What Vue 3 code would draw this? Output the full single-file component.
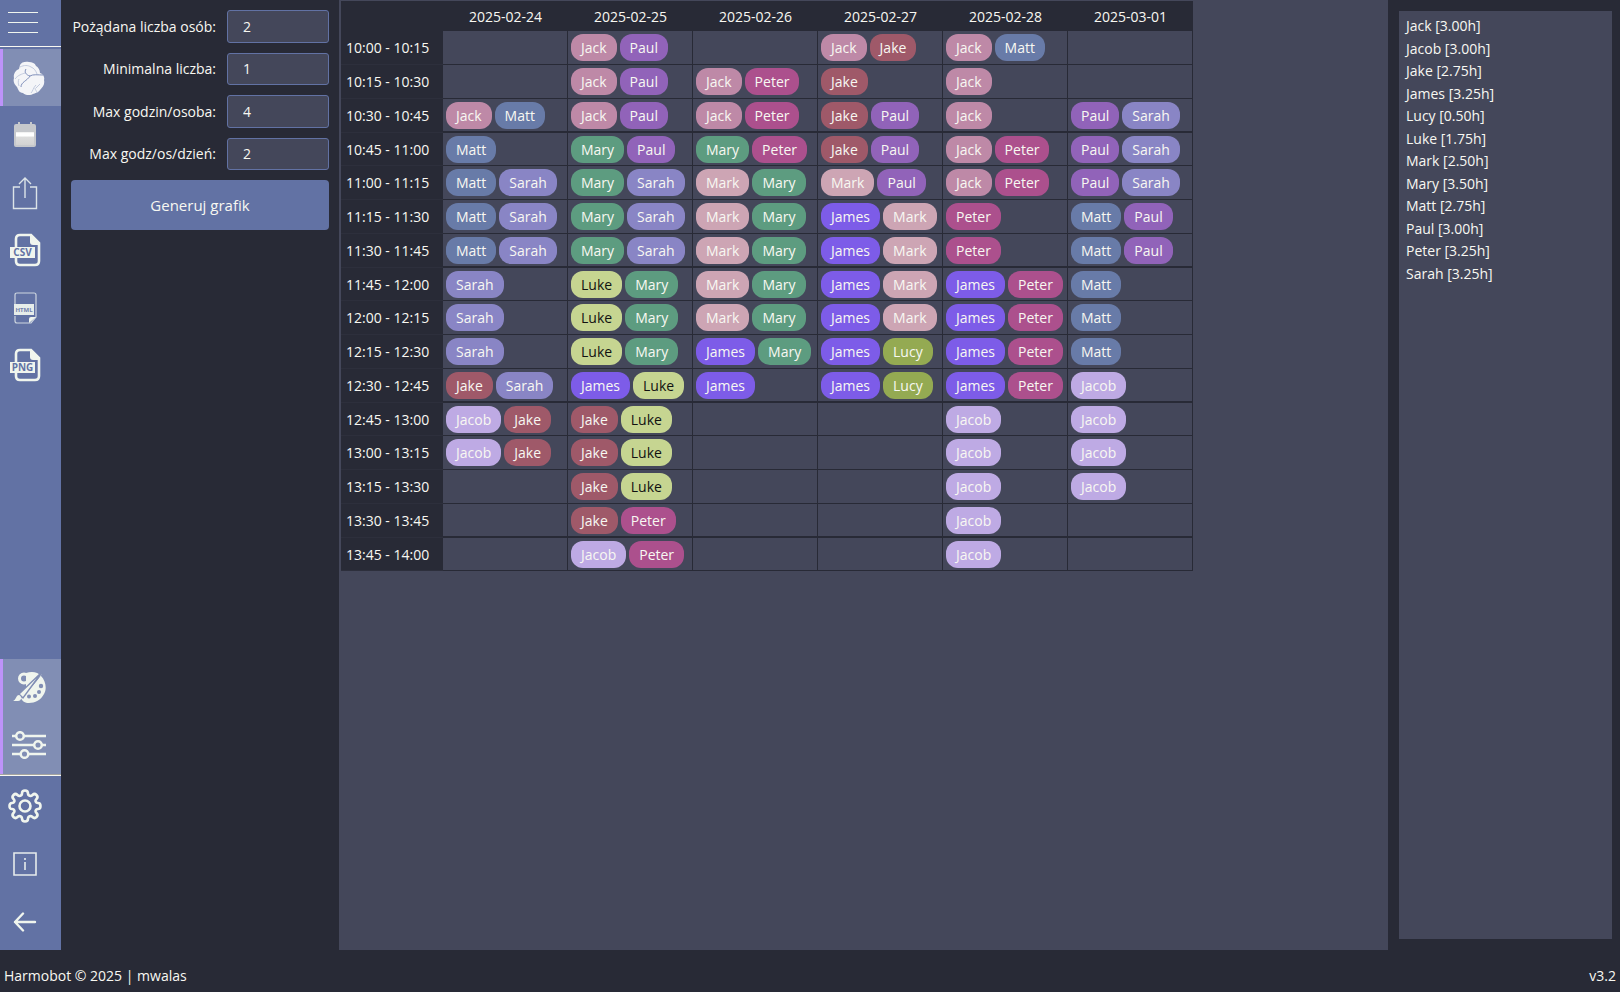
<script setup>
import { reactive } from 'vue'

const fields = reactive([
  { id: 'wanted', label: 'Pożądana liczba osób:', value: '2' },
  { id: 'minimum', label: 'Minimalna liczba:', value: '1' },
  { id: 'max-person', label: 'Max godzin/osoba:', value: '4' },
  { id: 'max-day', label: 'Max godz/os/dzień:', value: '2' },
])

const days = ['2025-02-24', '2025-02-25', '2025-02-26', '2025-02-27', '2025-02-28', '2025-03-01']

const schedule = [
  ['10:00 - 10:15', '', 'Jack Paul', '', 'Jack Jake', 'Jack Matt', ''],
  ['10:15 - 10:30', '', 'Jack Paul', 'Jack Peter', 'Jake', 'Jack', ''],
  ['10:30 - 10:45', 'Jack Matt', 'Jack Paul', 'Jack Peter', 'Jake Paul', 'Jack', 'Paul Sarah'],
  ['10:45 - 11:00', 'Matt', 'Mary Paul', 'Mary Peter', 'Jake Paul', 'Jack Peter', 'Paul Sarah'],
  ['11:00 - 11:15', 'Matt Sarah', 'Mary Sarah', 'Mark Mary', 'Mark Paul', 'Jack Peter', 'Paul Sarah'],
  ['11:15 - 11:30', 'Matt Sarah', 'Mary Sarah', 'Mark Mary', 'James Mark', 'Peter', 'Matt Paul'],
  ['11:30 - 11:45', 'Matt Sarah', 'Mary Sarah', 'Mark Mary', 'James Mark', 'Peter', 'Matt Paul'],
  ['11:45 - 12:00', 'Sarah', 'Luke Mary', 'Mark Mary', 'James Mark', 'James Peter', 'Matt'],
  ['12:00 - 12:15', 'Sarah', 'Luke Mary', 'Mark Mary', 'James Mark', 'James Peter', 'Matt'],
  ['12:15 - 12:30', 'Sarah', 'Luke Mary', 'James Mary', 'James Lucy', 'James Peter', 'Matt'],
  ['12:30 - 12:45', 'Jake Sarah', 'James Luke', 'James', 'James Lucy', 'James Peter', 'Jacob'],
  ['12:45 - 13:00', 'Jacob Jake', 'Jake Luke', '', '', 'Jacob', 'Jacob'],
  ['13:00 - 13:15', 'Jacob Jake', 'Jake Luke', '', '', 'Jacob', 'Jacob'],
  ['13:15 - 13:30', '', 'Jake Luke', '', '', 'Jacob', 'Jacob'],
  ['13:30 - 13:45', '', 'Jake Peter', '', '', 'Jacob', ''],
  ['13:45 - 14:00', '', 'Jacob Peter', '', '', 'Jacob', ''],
].map(([time, ...cells]) => ({ time, cells: cells.map((c) => c.split(' ').filter(Boolean)) }))

const totals = [
  'Jack [3.00h]', 'Jacob [3.00h]', 'Jake [2.75h]', 'James [3.25h]', 'Lucy [0.50h]', 'Luke [1.75h]',
  'Mark [2.50h]', 'Mary [3.50h]', 'Matt [2.75h]', 'Paul [3.00h]', 'Peter [3.25h]', 'Sarah [3.25h]',
]
</script>

<template>
  <div class="app">
    <div class="body">
      <nav class="sidebar">
        <button class="menu" type="button" aria-label="Menu"><i></i><i></i><i></i></button>
        <div class="group tools">
          <button class="item active" type="button" aria-label="Harmobot">
            <svg width="32" height="34" viewBox="0 0 32 34">
              <path d="M7 4C8 1 13 0 16 1c3 0 6 1 7 4 2 1 4 4 4 7 3 1 5 4 4 7 1 4-1 7-4 10-2 3-5 3-7 4-4 2-8 1-10-1-4 0-5-4-6-6C1 23 0 20 1 17c-1-4 2-8 5-9Z" fill="#f4f5f8" />
              <g fill="none" stroke="#bcc5da" stroke-width=".9">
                <path d="M7 6c4-2 8-2 11 0 3 1 5 4 6 7" />
                <path d="M2 18c3-4 7-5 10-6M6 25c-1-3-1-5 0-7M18 32c2-2 2-5 5-8m-1 3c0 2 2 3 2 5M27 23l-4 4" />
              </g>
              <g fill="none" stroke="#8090bb">
                <path d="M13 8c-2 3 0 6 4 7M8 26c0-5 6-6 9-11 3-2 8-1 13-1" />
              </g>
            </svg>
          </button>
          <button class="item" type="button" aria-label="Kalendarz">
            <svg width="24" height="26" viewBox="0 0 24 26">
              <defs>
                <linearGradient id="page" x1="0" y1="0" x2="0" y2="1">
                  <stop offset="0" stop-color="#ececec" /><stop offset=".12" stop-color="#fff" />
                  <stop offset=".3" stop-color="#fff" /><stop offset=".4" stop-color="#dcdcdc" />
                  <stop offset="1" stop-color="#d2d2d2" />
                </linearGradient>
              </defs>
              <path d="M5 0h2v2h10V0h2v2h2q2 0 2 2v19q0 2-2 2H3q-2 0-2-2V4q0-2 2-2h2Z" fill="#c6c8cc" />
              <path d="M3 10h18v13H3Z" fill="url(#page)" />
            </svg>
          </button>
          <button class="item" type="button" aria-label="Udostępnij">
            <svg width="26" height="34" viewBox="0 0 26 34" fill="none" stroke="#dce4e8" stroke-width="1.4">
              <path d="M8 11H1.500v21.500h23V11H18M13 22V2M7 8l6-6 6 6" />
            </svg>
          </button>
          <button class="item" type="button" aria-label="CSV">
            <svg width="32" height="34" viewBox="0 0 32 34">
              <path d="M7 14V6q0-4 4-4h11l8 8v18q0 4-4 4H11q-4 0-4-4v-3" fill="none" stroke="#f0f5ee" stroke-width="2.600" />
              <path d="M21 1l10 9v2h-7q-3 0-3-3Z" fill="#f0f5ee" />
              <path d="M1 14h25v11H1Z" fill="#f0f5ee" />
              <text x="13.500" y="23" text-anchor="middle" font-size="10" font-weight="700" fill="#6272a4">CSV</text>
            </svg>
          </button>
          <button class="item" type="button" aria-label="HTML">
            <svg width="26" height="34" viewBox="0 0 26 34">
              <path d="M3 14V4q0-2 2-2h17q2 0 2 2v22l-5 6H5q-2 0-2-2v-5" fill="none" stroke="#cdd5df" stroke-width="1.200" />
              <path d="M17 32v-4q0-2 2-2h5Z" fill="#f0f5ee" />
              <path d="M2 13h20v11H2Z" fill="#e7edea" />
              <text x="12" y="21" text-anchor="middle" font-size="6" font-weight="700" fill="#7080ac">HTML</text>
            </svg>
          </button>
          <button class="item" type="button" aria-label="PNG">
            <svg width="32" height="34" viewBox="0 0 32 34">
              <path d="M7 14V6q0-4 4-4h11l8 8v18q0 4-4 4H11q-4 0-4-4v-3" fill="none" stroke="#f0f5ee" stroke-width="2.600" />
              <path d="M21 1l10 9v2h-7q-3 0-3-3Z" fill="#f0f5ee" />
              <path d="M1 14h25v11H1Z" fill="#f0f5ee" />
              <text x="13.500" y="23" text-anchor="middle" font-size="10" font-weight="700" fill="#6272a4">PNG</text>
            </svg>
          </button>
        </div>
        <div class="group views">
          <button class="item active" type="button" aria-label="Kolory">
            <svg width="34" height="34" viewBox="0 0 34 34">
              <path d="M14 2C20 0 26 1 29 5c5 5 6 13 3 18-3 6-9 9-15 9-4 0-7-2-8-5 4-4 14-14 21-24L14 17Z" fill="#f0f5ee" />
              <circle cx="12" cy="7.500" r="4.500" fill="none" stroke="#f0f5ee" stroke-width="3" />
              <g fill="#818eb4">
                <circle cx="29" cy="15" r="2.200" /><circle cx="27" cy="21" r="2" />
                <circle cx="23" cy="25" r="2" /><circle cx="17" cy="25.500" r="2" />
              </g>
              <path d="M30 1 7 23l4 4Z" fill="#f0f5ee" stroke="#818eb4" stroke-width="1.400" />
              <path d="M1 30c3-1 3-6 6-6 3 1 3 6-1 6Z" fill="#f0f5ee" />
            </svg>
          </button>
          <button class="item active" type="button" aria-label="Filtry">
            <svg width="34" height="28" viewBox="0 0 34 28" fill="none" stroke="#f0f5ee" stroke-width="2.500">
              <path d="M0 5h4M12 5h22M0 14h22M30 14h4M0 23h8M17 23h17" />
              <circle cx="8" cy="5" r="3.800" /><circle cx="26" cy="14" r="3.800" /><circle cx="12.500" cy="23" r="3.800" />
            </svg>
          </button>
        </div>
        <div class="group system">
          <button class="item" type="button" aria-label="Ustawienia">
            <svg width="34" height="34" viewBox="0 0 34 34" fill="none" stroke="#f0f5ee" stroke-width="2.600" stroke-linejoin="round">
              <path d="M14 4.500q0-3 3-3t3 3q0 2 2.500 2.500 1 0 2-1 2-2 4 0t0 4q-1 1-1 2 .5 2 2.500 2 2.500 0 2.500 3t-2.500 3q-2 0-2.500 2 0 1 1 2 2 2 0 4t-4 0q-1-1-2-1-2.500.5-2.500 2.500 0 3-3 3t-3-3q0-2-2.500-2.500-1 0-2 1-2 2-4 0t0-4q1-1 1-2-.5-2-2.500-2-2.500 0-2.500-3t2.500-3q2 0 2.500-2 0-1-1-2-2-2 0-4t4 0q1 1 2 1 2.500-.5 2.500-2.500Z" />
              <circle cx="17" cy="17" r="5.500" />
            </svg>
          </button>
          <button class="item" type="button" aria-label="Informacje">
            <svg width="24" height="24" viewBox="0 0 24 24" fill="none" stroke="#e6ecec" stroke-width="1.600">
              <path d="M1 1h22v22H1Z" /><path d="M12 10v8M12 6v2" />
            </svg>
          </button>
          <button class="item" type="button" aria-label="Wstecz">
            <svg width="24" height="20" viewBox="0 0 24 20" fill="none" stroke="#f0f5ee" stroke-width="2.400" stroke-linecap="round" stroke-linejoin="round">
              <path d="M22 10H2M10 1.500 2 10l8 8.500" />
            </svg>
          </button>
        </div>
      </nav>

      <form class="settings" @submit.prevent>
        <div class="fields">
          <template v-for="f in fields" :key="f.id">
            <label :for="f.id">{{ f.label }}</label>
            <input :id="f.id" v-model="f.value" type="text" inputmode="numeric" />
          </template>
        </div>
        <button class="generate" type="submit">Generuj grafik</button>
      </form>

      <main class="board">
        <table>
          <thead>
            <tr>
              <th class="corner"></th>
              <th v-for="d in days" :key="d" scope="col">{{ d }}</th>
            </tr>
          </thead>
          <tbody>
            <tr v-for="row in schedule" :key="row.time">
              <th scope="row">{{ row.time }}</th>
              <td v-for="(people, i) in row.cells" :key="i">
                <div class="chips">
                  <span v-for="p in people" :key="p" class="chip" :class="p.toLowerCase()">{{ p }}</span>
                </div>
              </td>
            </tr>
          </tbody>
        </table>
      </main>

      <aside class="summary">
        <ul>
          <li v-for="t in totals" :key="t">{{ t }}</li>
        </ul>
      </aside>
    </div>
    <footer class="footer">
      <span>Harmobot © 2025 | mwalas</span>
      <span>v3.2</span>
    </footer>
  </div>
</template>

<style>
body {
  background: #282a36;
}
</style>

<style scoped>
.app {
  display: flex;
  flex-direction: column;
  min-height: 100vh;
  background: #282a36;
  color: #f8f8f2;
  font: 14px/22px "Open Sans", "Noto Sans", sans-serif;
}
.app *,
.app {
  box-sizing: border-box;
}
button,
input {
  font: inherit;
  color: inherit;
}
.body {
  flex: 1;
  display: flex;
}

.sidebar {
  flex: none;
  width: 61px;
  display: flex;
  flex-direction: column;
  background: #6272a4;
}
.menu {
  display: flex;
  flex-direction: column;
  gap: 9px;
  height: 47px;
  margin-bottom: 2px;
  padding: 12px 8px 0;
  background: none;
  border: 0;
  border-bottom: 1px solid #f8f8f2;
}
.menu i {
  flex: none;
  width: 30px;
  height: 1px;
  background: #f0f5ee;
}
.group {
  display: flex;
  flex-direction: column;
}
.item {
  display: flex;
  align-items: center;
  justify-content: center;
  height: 58px;
  padding: 0 12px 0 0;
  background: none;
  border: 0;
}
.item svg {
  display: block;
  flex: none;
}
.item.active {
  padding: 0 6px 0 0;
  background: #818eb4;
  border-left: 3px solid #bd93f9;
}
.tools .item:nth-child(odd),
.views .item:nth-child(odd) {
  height: 57px;
}
.views {
  margin-top: auto;
  border-bottom: 2px groove #f8f8f2;
}
.system {
  padding-top: 1px;
}
.system .item:last-child {
  height: 57px;
}

.settings {
  flex: none;
  width: 278px;
  padding: 10px;
}
.fields {
  display: grid;
  grid-template-columns: 1fr 102px;
  grid-template-rows: repeat(4, 1fr);
  gap: 10px 11px;
  height: 160px;
  margin-bottom: 10px;
  align-items: center;
}
.fields label {
  padding-top: 1px;
  text-align: right;
  white-space: nowrap;
}
.fields input {
  width: 100%;
  height: 100%;
  padding: 0 15px;
  background: #44475a;
  border: 1px solid #6272a4;
  border-radius: 3px;
}
.generate {
  width: 100%;
  height: 50px;
  background: #6272a4;
  border: 0;
  border-radius: 4px;
  font-size: 15px;
}

.board {
  flex: 1;
  min-width: 0;
  padding: 1px 2px;
  background: #44475a;
}
table {
  table-layout: fixed;
  width: 852px;
  border-collapse: separate;
  border-spacing: 0;
}
th {
  padding: 1px 0 0;
  font-weight: 400;
  background: #282a36;
}
thead th {
  height: 30px;
}
.corner {
  width: 102px;
}
tbody tr {
  height: 34px;
}
tbody tr:nth-child(4n) {
  height: 33px;
}
tbody th {
  padding-left: 5px;
  text-align: left;
  border-bottom: 1px solid #2d2f3c;
}
td {
  padding: 0 0 0 3px;
  border-right: 1px solid #282a36;
  border-bottom: 1px solid #282a36;
}
tr:nth-child(4n + 3) td {
  border-bottom-width: 2px;
}
.chips {
  display: flex;
  gap: 3px;
}
.chip {
  height: 27px;
  padding: 0 10px;
  line-height: 28px;
  border-radius: 12px;
}
.jack { background: #be89a7; }
.paul { background: #9163b9; }
.matt { background: #687ba8; }
.mary { background: #5d9c80; }
.sarah { background: #8985c5; }
.peter { background: #ac508d; }
.jake { background: #9f5969; }
.mark { background: #cda5b4; }
.james { background: #7d5ce8; }
.jacob { background: #beaae4; }
.lucy { background: #94aa52; }
.luke { background: #c6d591; color: #111; }

.summary {
  flex: none;
  display: flex;
  width: 232px;
  padding: 11px 8px 11px 11px;
}
.summary ul {
  flex: 1;
  margin: 0;
  padding: 4px 7px;
  list-style: none;
  background: #44475a;
}
.summary li:nth-child(even) {
  line-height: 23px;
}

.footer {
  display: flex;
  justify-content: space-between;
  height: 42px;
  padding: 15px 4px 0;
}
</style>
